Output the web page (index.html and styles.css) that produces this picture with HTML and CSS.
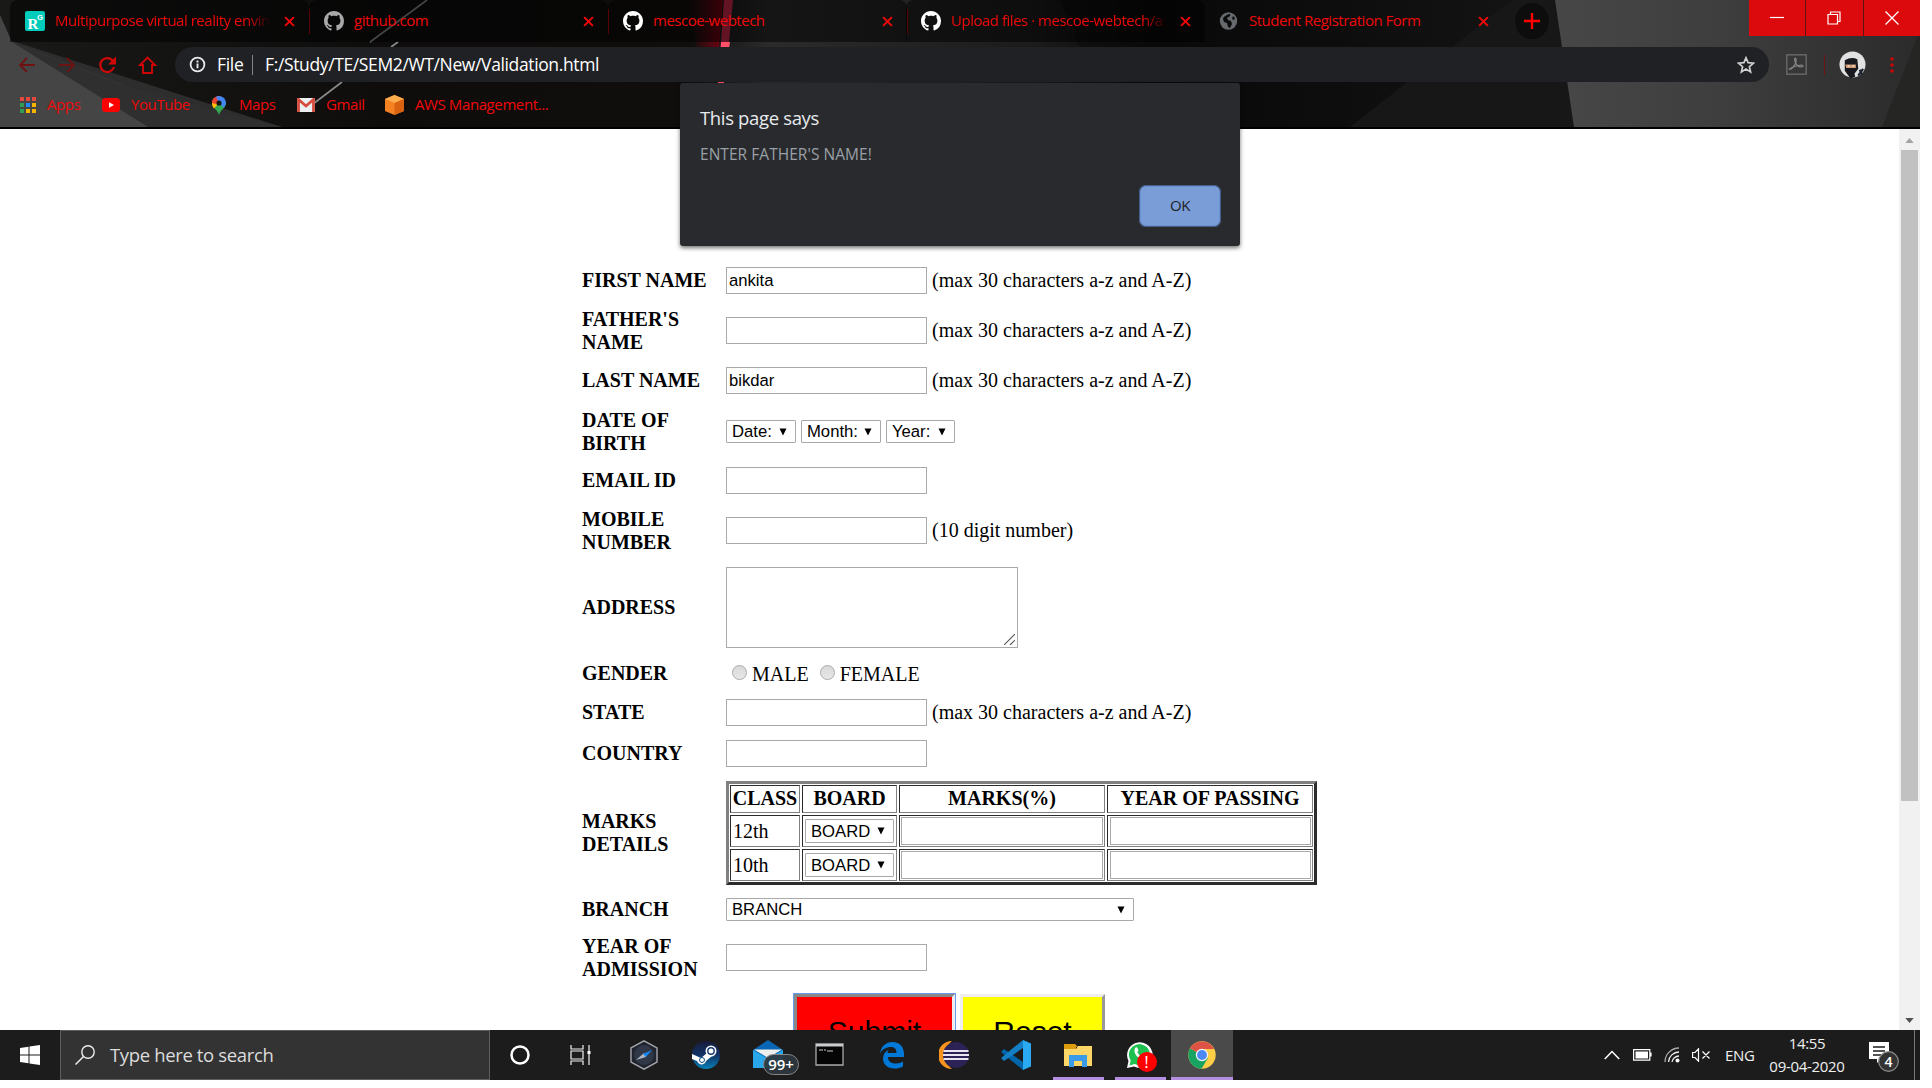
FILE: index.html
```html
<!DOCTYPE html>
<html lang="en">
<head>
<meta charset="utf-8">
<title>Student Registration Form</title>
<link rel="stylesheet" href="styles.css">
</head>
<body>
<svg class="defs" width="0" height="0">
  <defs>
    <symbol id="github" viewBox="0 0 16 16"><path fill-rule="evenodd" d="M8 0C3.58 0 0 3.58 0 8c0 3.54 2.29 6.53 5.47 7.59.4.07.55-.17.55-.38 0-.19-.01-.82-.01-1.49-2.01.37-2.53-.49-2.69-.94-.09-.23-.48-.94-.82-1.13-.28-.15-.68-.52-.01-.53.63-.01 1.08.58 1.23.82.72 1.21 1.87.87 2.33.66.07-.52.28-.87.51-1.07-1.78-.2-3.64-.89-3.64-3.95 0-.87.31-1.59.82-2.15-.08-.2-.36-1.02.08-2.12 0 0 .67-.21 2.2.82.64-.18 1.32-.27 2-.27s1.36.09 2 .27c1.53-1.04 2.2-.82 2.2-.82.44 1.1.16 1.92.08 2.12.51.56.82 1.27.82 2.15 0 3.07-1.87 3.75-3.65 3.95.29.25.54.73.54 1.48 0 1.07-.01 1.93-.01 2.2 0 .21.15.46.55.38A8.01 8.01 0 0 0 16 8c0-4.42-3.58-8-8-8z"/></symbol>
    <symbol id="close" viewBox="0 0 10 10"><path d="M1 1l8 8M9 1L1 9" stroke="#f00808" stroke-width="1.8" fill="none"/></symbol>
    <symbol id="arrow" viewBox="0 0 8 8"><path d="M.5 0.5h7L4 7.500z" fill="#000"/></symbol>
  </defs>
</svg>
<div class="screen">
  <header class="chrome">
    <svg class="theme" viewBox="0 0 1920 127" preserveAspectRatio="none">
      <defs>
        <linearGradient id="base"><stop offset="0" stop-color="#191918"/><stop offset=".2" stop-color="#0e0d0c"/><stop offset=".36" stop-color="#100e0d"/><stop offset=".4" stop-color="#2b2b2b"/><stop offset=".54" stop-color="#1b1b1b"/><stop offset=".6" stop-color="#060606"/><stop offset=".7" stop-color="#111"/><stop offset=".8" stop-color="#222"/></linearGradient>
        <linearGradient id="right"><stop offset="0" stop-color="#474747"/><stop offset=".45" stop-color="#3e3e3e"/><stop offset="1" stop-color="#2b2b2b"/></linearGradient>
        <linearGradient id="glow"><stop offset="0" stop-color="#500008" stop-opacity="0"/><stop offset="1" stop-color="#780010"/></linearGradient>
      </defs>
      <rect width="1920" height="127" fill="url(#base)"/>
      <path d="M0 37L282 127H0z" fill="#2d2d2d"/>
      <path d="M0 15L12 42L129 87L148 127H0z" fill="#454545"/>
      <path d="M12 42L115 82L129 87L282 127H148z" fill="#2f2f2f"/>
      <path d="M427 0L370 42M398 42L391 47M342 82L313 104" stroke="#8a8a8a" stroke-width="1.6"/>
      <path d="M688 0h35l-4 47h-22z" fill="url(#glow)"/>
      <path d="M724 0h9l-4 42h-8z" fill="#c5284a"/>
      <path d="M721 42h9l-6 41h-6z" fill="#ff5069"/>
      <path d="M1060 0L1080 47L1170 127H1350L1520 0z" fill="#0c0c0c" opacity=".6"/>
      <path d="M1350 127L1512 0H1556L1574 127z" fill="#171717"/>
      <path d="M1555 0L1574 127H1920V0z" fill="url(#right)"/>
      <path d="M1920 30L1882 127H1920z" fill="#252524"/>
    </svg>
    <div class="tabs">
      <div class="tab"><svg class="fav" viewBox="0 0 20 20"><rect width="20" height="20" rx="2" fill="#00ccbb"/><text x="2.5" y="17.5" font-family="Liberation Serif, serif" font-weight="bold" font-size="15" fill="#fff">R</text><text x="12" y="8.5" font-family="Liberation Sans, sans-serif" font-weight="bold" font-size="8" fill="#fff">G</text></svg><span class="title fade">Multipurpose virtual reality environment</span><svg class="x"><use href="#close"/></svg></div>
      <div class="tab"><svg class="fav gray"><use href="#github"/></svg><span class="title">github.com</span><svg class="x"><use href="#close"/></svg></div>
      <div class="tab"><svg class="fav white"><use href="#github"/></svg><span class="title">mescoe-webtech</span><svg class="x"><use href="#close"/></svg></div>
      <div class="tab last-sep"><svg class="fav white"><use href="#github"/></svg><span class="title fade">Upload files · mescoe-webtech/assignment</span><svg class="x"><use href="#close"/></svg></div>
      <div class="tab active"><svg class="fav" viewBox="0 0 20 20"><circle cx="9.5" cy="10" r="8.7" fill="#66696d"/><path d="M8 4c2-2 4-1 3 1l-3 2 1 2 3 1 1 3-2 4-2-1-1-4-3-1-1-3c0-2 2-3 4-4zM14 5l2 2-1 2-2-1z" fill="#0c0c0c"/></svg><span class="title">Student Registration Form</span><svg class="x"><use href="#close"/></svg></div>
      <div class="newtab"><svg viewBox="0 0 16 16"><path d="M8 0v16M0 8h16" stroke="#f00" stroke-width="2.4"/></svg></div>
      <div class="winbtns">
        <div><svg viewBox="0 0 14 14"><path d="M0 6.5h14" stroke="#fff" stroke-width="1.2"/></svg></div>
        <div><svg viewBox="0 0 14 14"><path d="M1 3.5h9.5V13H1zM3.5 3.5V1H13v9.5h-2.5" stroke="#fff" stroke-width="1.2" fill="none"/></svg></div>
        <div><svg viewBox="0 0 14 14"><path d="M.5.5l13 13M13.500.5l-13 13" stroke="#fff" stroke-width="1.3"/></svg></div>
      </div>
    </div>
    <div class="toolbar">
      <svg class="nav" viewBox="0 0 150 24">
        <g fill="none" stroke-width="1.800"><path d="M18 12H3M10 5L3 12l7 7M42 12h15M50 5l7 7-7 7" stroke="#6c1212"/><path d="M96 8A7 7 0 1 0 97 14" stroke="#d00808" stroke-width="2.2"/><path d="M123 12h3v8h9v-8h3L130.500 4.500z" stroke="#cf0606" stroke-width="1.900"/></g><path d="M99 3.500v8h-8z" fill="#d00808"/>
      </svg>
      <div class="omnibox">
        <svg class="info" viewBox="0 0 18 18"><circle cx="9" cy="9" r="7.3" fill="none" stroke="#e8eaed" stroke-width="1.9"/><path d="M9 8v5M9 4.800v2" stroke="#e8eaed" stroke-width="2"/></svg>
        <span class="scheme">File</span><span class="bar"></span><span class="url">F:/Study/TE/SEM2/WT/New/Validation.html</span>
        <svg class="star" viewBox="0 0 18 18"><path d="M9 1.800l2.100 4.900 5.300.5-4 3.500 1.200 5.200L9 13.100l-4.600 2.800 1.200-5.200-4-3.500 5.300-.5z" fill="none" stroke="#d0d0d0" stroke-width="1.700"/></svg>
      </div>
      <svg class="pdf" viewBox="0 0 21 21"><rect x=".8" y=".8" width="19.400" height="19.400" fill="none" stroke="#666" stroke-width="1.500"/><path d="M4 15c3 0 7-7 6-10-2-3-2 3 1 6 3 3 6 2 6 1 0-2-8 0-12 2-2 1-2 2-1 1z" fill="none" stroke="#858585" stroke-width="1.200"/></svg>
      <span class="redbar"></span>
      <svg class="avatar" viewBox="0 0 28 28"><circle cx="14" cy="13.500" r="13.500" fill="#e1e1e1"/><path d="M6 9q7-4 13-1l1 10-4 5 1 3-5 2-3-4-3-4z" fill="#17191f"/><path d="M6.500 13.500h11v3.500h-10z" fill="#d09a75"/><path d="M9 15h2M14 15h2" stroke="#fff" stroke-width="1.200"/><path d="M20 25l5-7M21.500 19l2.500 5" stroke="#1d2230" stroke-width="2.300"/></svg>
      <svg class="dots" viewBox="0 0 4 16"><circle cx="2" cy="2" r="1.800"/><circle cx="2" cy="8" r="1.800"/><circle cx="2" cy="14" r="1.800"/></svg>
    </div>
    <div class="bookmarks">
      <div class="bm apps"><svg viewBox="0 0 16 16"><path fill="#e2483d" d="M0 0h4v4H0zM6 0h4v4H6zM12 0h4v4h-4z"/><path fill="#2f9d52" d="M0 6h4v4H0zM0 12h4v4H0z"/><path fill="#1e88ff" d="M6 6h4v4H6z"/><path fill="#f5b400" d="M12 6h4v4h-4zM6 12h4v4H6zM12 12h4v4h-4z"/></svg><span>Apps</span></div>
      <div class="bm yt"><svg viewBox="0 0 18 14"><rect width="18" height="14" rx="3.500" fill="#f00"/><path d="M7 4.200v5.600L12 7z" fill="#fff"/></svg><span>YouTube</span></div>
      <div class="bm maps"><svg viewBox="0 0 14 19"><path d="M7 19C6 14 0 12 0 7l14 0c0 5-6 7-7 12z" fill="#34a853"/><path d="M0 7a7 7 0 0 1 2-5l5 5-5 5.500C.7 11 0 9 0 7z" fill="#fbbc04"/><path d="M2 2a7 7 0 0 1 7.500-1.500L4 8 0 7c0-2 .7-4 2-5z" fill="#ea4335"/><path d="M4 .8A7 7 0 0 1 14 7l-2 5L7 7z" fill="#4285f4"/><circle cx="7" cy="7" r="2.600" fill="#151515"/></svg><span>Maps</span></div>
      <div class="bm gmail"><svg viewBox="0 0 18 14"><rect width="18" height="14" rx="1" fill="#eceff1"/><path d="M1.500 14V1.500L9 8l7.500-6.500V14" fill="none" stroke="#d54b3d" stroke-width="2.800"/></svg><span>Gmail</span></div>
      <div class="bm aws"><svg viewBox="0 0 19 20"><path d="M0 4L9.500 0 19 4v12l-9.500 4L0 16z" fill="#f58220"/><path d="M0 4L9.500 0 19 4l-9.500 4z" fill="#ffac4d"/><path d="M9.500 8L19 4v12l-9.500 4z" fill="#d8620f"/></svg><span>AWS Management...</span></div>
    </div>
    <div class="dialog">
      <div class="says">This page says</div>
      <div class="msg">ENTER FATHER'S NAME!</div>
      <div class="ok">OK</div>
    </div>
  </header>

  <main class="page">
    <form class="form">
      <div class="row" style="height:41px"><b>FIRST NAME</b><div class="field"><i class="input">ankita</i><span class="hint">(max 30 characters a-z and A-Z)</span></div></div>
      <div class="row" style="height:59px"><b>FATHER'S<br>NAME</b><div class="field"><i class="input"></i><span class="hint">(max 30 characters a-z and A-Z)</span></div></div>
      <div class="row" style="height:41px"><b>LAST NAME</b><div class="field"><i class="input">bikdar</i><span class="hint">(max 30 characters a-z and A-Z)</span></div></div>
      <div class="row" style="height:61px"><b>DATE OF<br>BIRTH</b><div class="field"><i class="select day">Date:<svg><use href="#arrow"/></svg></i><i class="select month">Month:<svg><use href="#arrow"/></svg></i><i class="select year">Year:<svg><use href="#arrow"/></svg></i></div></div>
      <div class="row" style="height:37px"><b>EMAIL ID</b><div class="field"><i class="input"></i></div></div>
      <div class="row" style="height:63px"><b>MOBILE<br>NUMBER</b><div class="field"><i class="input"></i><span class="hint">(10 digit number)</span></div></div>
      <div class="row" style="height:91px"><b>ADDRESS</b><div class="field"><i class="area"><svg viewBox="0 0 10 10"><path d="M0 10L10 0M5.500 10L10 5.500" stroke="#555"/></svg></i></div></div>
      <div class="row" style="height:40px"><b>GENDER</b><div class="field genders"><i class="radio"></i><span class="male">MALE</span><i class="radio"></i><span class="female">FEMALE</span></div></div>
      <div class="row" style="height:39px"><b>STATE</b><div class="field"><i class="input"></i><span class="hint">(max 30 characters a-z and A-Z)</span></div></div>
      <div class="row" style="height:43px"><b>COUNTRY</b><div class="field"><i class="input"></i></div></div>
      <div class="row" style="height:116px"><b>MARKS<br>DETAILS</b>
        <div class="marks">
          <div class="th">CLASS</div><div class="th">BOARD</div><div class="th">MARKS(%)</div><div class="th">YEAR OF PASSING</div>
          <div>12th</div><div><i class="select board">BOARD<svg><use href="#arrow"/></svg></i></div><div><i class="input"></i></div><div><i class="input"></i></div>
          <div>10th</div><div><i class="select board">BOARD<svg><use href="#arrow"/></svg></i></div><div><i class="input"></i></div><div><i class="input"></i></div>
        </div>
      </div>
      <div class="row" style="height:37px"><b>BRANCH</b><div class="field"><i class="select branch">BRANCH<svg><use href="#arrow"/></svg></i></div></div>
      <div class="row" style="height:59px"><b>YEAR OF<br>ADMISSION</b><div class="field"><i class="input"></i></div></div>
      <div class="actions"><div class="submit">Submit</div><div class="reset">Reset</div></div>
    </form>
    <div class="scroll"><svg viewBox="0 0 10 6"><path d="M0 6L5 0l5 6z" fill="#a3a3a3"/></svg><div class="thumb"></div><svg viewBox="0 0 10 6"><path d="M0 0l5 6 5-6z" fill="#505050"/></svg></div>
  </main>

  <footer class="taskbar">
    <div class="start"><svg viewBox="0 0 20 20"><path d="M0 3l8.500-1.200v7.700H0zM9.500 1.600L20 0v9.500H9.500zM0 10.500h8.500v7.700L0 17zM9.500 10.500H20V20L9.500 18.400z" fill="#fff"/></svg></div>
    <div class="search"><svg viewBox="0 0 20 20"><circle cx="13" cy="7" r="6.200" fill="none" stroke="#eee" stroke-width="1.400"/><path d="M8.500 11.500L.5 19.500" stroke="#eee" stroke-width="1.500"/></svg><span>Type here to search</span></div>
    <div class="apps-row">
      <div class="app"><svg viewBox="0 0 30 30"><circle cx="15" cy="15" r="8.500" fill="none" stroke="#fff" stroke-width="2.500"/></svg></div>
      <div class="app"><svg viewBox="0 0 30 30"><path d="M4 5v4h12V5M4 25v-4h12v4M4 11h12v8H4zM22 5v20" fill="none" stroke="#f2f2f2" stroke-width="1.200"/><path d="M20.500 11h3v3h-3z" fill="#fff"/></svg></div>
      <div class="app"><svg viewBox="0 0 30 30"><path d="M15 .8L28 8v14l-13 7.200L2 22V8z" fill="#20242f" stroke="#a7a9ae" stroke-width="1.400"/><circle cx="15" cy="15" r="10" fill="#303746"/><path d="M7 20l8-7 2 4z" fill="#aab6c5"/><path d="M14 14l9-4-6 7z" fill="#1687f3"/></svg></div>
      <div class="app"><svg viewBox="0 0 30 30"><defs><linearGradient id="steam" x2="0" y2="1"><stop stop-color="#171b3b"/><stop offset=".5" stop-color="#123366"/><stop offset="1" stop-color="#0780b8"/></linearGradient></defs><circle cx="15" cy="15" r="14" fill="url(#steam)"/><path d="M1 14l9 4 6-5 5 3-6 5c-1 4-7 5-9 0l-5-2z" fill="#fff"/><circle cx="20" cy="11" r="5.500" fill="#fff"/><circle cx="20" cy="11" r="3.200" fill="#fff" stroke="#163b6c" stroke-width="1.400"/><circle cx="11" cy="20" r="2.500" fill="none" stroke="#174f83"/></svg></div>
      <div class="app"><svg viewBox="0 0 30 30"><path d="M0 10L15 0l15 10v18H0z" fill="#0866b4"/><path d="M0 10l15 9 15-9v18H0z" fill="#28a8ea"/><path d="M1 9.500h28L15 18z" fill="#eee"/></svg><span class="count">99+</span></div>
      <div class="app"><svg viewBox="0 0 30 30"><path d="M1 4h27v21H1z" fill="#050505" stroke="#a9aaac" stroke-width="1.300"/><path d="M1 4h27v2.500H1z" fill="#c9cbce"/><path d="M4 10h2M7 9v2M9 10h2M12 11h6" stroke="#ccc"/></svg></div>
      <div class="app"><svg viewBox="0 0 30 30"><path d="M3 14C4 5 10 2 15.500 2 23 2 27 7.500 27 14v3H11c0 5 4 6.500 8 6.500 3 0 5-.8 7-2v5c-3 1.500-5 2-8.500 2C10 28.500 6 24 6 18.500c0-4 2-7 6-9-1 1-1.500 2.500-1.500 3.500h9c0-4-2-6-5.500-6C9.500 7 5 9 3 14z" fill="#0078d7"/></svg></div>
      <div class="app"><svg viewBox="0 0 30 30"><path d="M13 1A14 14 0 0 0 13 29C5 23 5 7 13 1z" fill="#f7941e"/><circle cx="17" cy="15" r="13" fill="#2c2255"/><path d="M4.500 11h25M4 15h26M4.500 19h25" stroke="#e8e4f2" stroke-width="2.200"/></svg></div>
      <div class="app"><svg viewBox="0 0 30 30"><path d="M22 0v30L0 12l3-3 19 13z" fill="#0065a9"/><path d="M22 0L0 18l3 3L22 8z" fill="#147fc4"/><path d="M22 0l8 3.500v23L22 30z" fill="#2aaaf3"/></svg></div>
      <div class="app open"><svg viewBox="0 0 30 30"><path d="M1 4h11l3 3h-2v6H1z" fill="#dc9c0d"/><path d="M1 9h12l2-3h14v20H1z" fill="#fcd667"/><path d="M6 27V15h18v12h-5v-6h-8v6z" fill="#3b9be8"/></svg></div>
      <div class="app open"><svg viewBox="0 0 30 30"><path d="M2 28l1.500-7A12.800 12.800 0 1 1 9 26.500z" fill="#fff"/><path d="M4.500 25.500l1.200-5A10.500 10.500 0 1 1 9.700 24z" fill="#20c050"/><path d="M10 8c1-1 2-1 2.500 0l1 2.500-1.200 1.700c1 2 2.500 3 4.500 4l1.700-1.700 3 1.500c0 3-2.500 4-5 3.300C12 17.500 8 13 10 8z" fill="#fff"/></svg><span class="bang">!</span></div>
      <div class="app current"><svg viewBox="0 0 30 30"><circle cx="15" cy="15" r="13.700" fill="#ffcd46"/><path d="M15 15L3.100 8.200A13.700 13.700 0 0 0 14.500 28.700L21 18z" fill="#17a463"/><path d="M15 15L3.100 8.200A13.700 13.700 0 0 1 27 9H15z" fill="#de5246"/><circle cx="15" cy="15" r="6.200" fill="#f1f1f1"/><circle cx="15" cy="15" r="4.900" fill="#4c8bf5"/></svg></div>
    </div>
    <div class="tray">
      <svg class="chev" viewBox="0 0 16 10"><path d="M.8 9L8 1.500 15.200 9" fill="none" stroke="#fff" stroke-width="1.500"/></svg>
      <svg class="batt" viewBox="0 0 19 12"><path d="M.6.600h16.200v10.500H.6zM18 3.500v4" fill="none" stroke="#fff" stroke-width="1.200"/><path d="M2.500 2.500h12.500v7H2.500z" fill="#fff"/></svg>
      <svg class="wifi" viewBox="0 0 16 16"><g fill="none" stroke="#aaa" stroke-width="1.300"><path d="M1 15A14 14 0 0 1 15 1"/><path d="M4.500 15A10.500 10.500 0 0 1 15 5M8 15A7 7 0 0 1 15 9" stroke="#eee"/></g><circle cx="13.500" cy="13.500" r="2" fill="#fff"/></svg>
      <svg class="snd" viewBox="0 0 18 14"><path d="M.6 4.500h2.500L6.500.8v12.400L3.100 9.500H.6zM10.500 3.500l7 7M17.500 3.500l-7 7" fill="none" stroke="#fff" stroke-width="1.200"/></svg>
      <span class="lang">ENG</span>
      <div class="clock"><span class="time">14:55</span><span>09-04-2020</span></div>
      <svg class="note" viewBox="0 0 30 32"><path d="M0 0h20v17h-8l-4 4v-4H0z" fill="#fff"/><path d="M4 5h12M4 9h12M4 13h8" stroke="#1b1b1b" stroke-width="1.300"/><circle cx="19.500" cy="19.500" r="9.800" fill="#333" stroke="#8d8d8d" stroke-width="1.200"/><text x="15.500" y="24.500" font-family="Open Sans, sans-serif" font-size="14" font-weight="600" fill="#fff">4</text></svg>
      <span class="peek"></span>
    </div>
  </footer>
</div>
</body>
</html>
```
FILE: styles.css
```css
* { box-sizing: border-box; }
body { margin: 0; width: 1932px; height: 1088px; background: #fff; overflow: hidden; font-family: "Open Sans", "Noto Sans", sans-serif; }
svg { display: block; flex: none; }
.defs { position: absolute; }
i { font-style: normal; }
.screen { width: 1920px; height: 1080px; display: flex; flex-direction: column; background: #fff; }

/* browser frame */
.chrome { position: relative; height: 129px; flex: none; border-bottom: 2px solid #000; display: flex; flex-direction: column; }
.theme { position: absolute; inset: 0; width: 1920px; height: 127px; }
.tabs, .toolbar, .bookmarks { position: relative; display: flex; align-items: center; }
.tabs { height: 42px; padding-left: 10px; color: #f00808; font-size: 15px; }
.tab { width: 299px; height: 42px; flex: none; display: flex; align-items: center; padding: 0 14px 0 15px; position: relative; background: rgba(0,0,0,.5); border-radius: 8px 8px 0 0; }
.tab::after { content: ""; position: absolute; right: -1px; top: 9px; width: 1px; height: 25px; background: #b00606; }
.last-sep::after, .active::after { display: none; }
.last-sep, .tab.active { margin-left: -1px; }
.tab.active { background: none; }
.fav { width: 20px; height: 20px; }
.gray { fill: #a8a8a8; }
.white { fill: #fff; }
.title { margin: -2px 0 0 10px; width: 219px; white-space: nowrap; overflow: hidden; letter-spacing: -.48px; line-height: 24px; }
.fade { -webkit-mask-image: linear-gradient(90deg, #000 88%, transparent 99%); mask-image: linear-gradient(90deg, #000 88%, transparent 99%); }
.x { width: 11px; height: 11px; margin-left: 11px; }
.newtab { width: 34px; height: 36px; margin-left: 12px; border-radius: 50%; background: #0d0d0d; display: flex; align-items: center; justify-content: center; }
.newtab svg { width: 16px; height: 16px; }
.winbtns { margin-left: auto; align-self: flex-start; display: flex; gap: 1px; width: 171px; height: 36px; background: #5d1414; }
.winbtns div { flex: 1; background: #dc0a0d; display: flex; align-items: center; justify-content: center; }
.winbtns svg { width: 14px; height: 14px; }
.toolbar { height: 45px; }
.nav { width: 150px; height: 24px; margin-left: 17px; }
.omnibox { margin-left: 8px; width: 1594px; height: 35px; border-radius: 18px; background: #202124; display: flex; align-items: center; color: #fff; font-size: 17.500px; padding: 0 14px; }
.omnibox span:not(.bar) { margin-top: -2px; }
.info { width: 17px; height: 17px; }
.scheme { margin-left: 11px; width: 35px; letter-spacing: -.3px; }
.bar { width: 1px; height: 20px; background: #80868b; margin-right: 12px; }
.url { letter-spacing: -.37px; }
.star { width: 18px; height: 18px; margin-left: auto; }
.pdf { width: 21px; height: 21px; margin-left: 17px; }
.redbar { width: 1px; height: 20px; margin-left: 17px; background: #6f1215; }
.avatar { width: 27px; height: 28px; margin-left: 14px; }
.dots { width: 4px; height: 16px; margin-left: 24px; fill: #cf0505; }
.bookmarks { height: 40px; padding-left: 20px; padding-bottom: 4px; color: #f00808; font-size: 15px; letter-spacing: -.4px; }
.bm { display: flex; align-items: center; white-space: nowrap; flex: none; }
.bm span { margin-top: -2px; }
.bm svg { margin-right: 11px; }
.apps { width: 82px; } .apps svg { width: 16px; height: 16px; }
.yt { width: 110px; } .yt svg { width: 18px; height: 14px; }
.maps { width: 85px; } .maps svg { width: 14px; height: 19px; margin-right: 13px; }
.gmail { width: 88px; } .gmail svg { width: 18px; height: 14px; }
.aws svg { width: 19px; height: 20px; }
.dialog { position: absolute; z-index: 2; left: 680px; top: 83px; width: 560px; height: 163px; background: #292a2d; border-radius: 3px; box-shadow: 0 2px 4px rgba(0,0,0,.55); padding: 22px 20px 18px 20px; display: flex; flex-direction: column; }
.says { font-size: 18.500px; line-height: 26px; color: #e8eaed; letter-spacing: -.35px; }
.msg { font-size: 15.500px; line-height: 22px; margin-top: 12px; color: #9aa0a6; letter-spacing: .04px; }
.ok { align-self: flex-end; margin-top: 21px; width: 80px; height: 40px; border: 1px solid #6f92cc; outline: 1px solid #45608c; border-radius: 5px; background: #7a9dd8; color: #202124; font-size: 15px; line-height: 36px; text-align: center; letter-spacing: -.4px; }

/* registration form */
.page { height: 901px; flex: none; overflow: hidden; display: flex; justify-content: space-between; font: 20px/23px "Liberation Serif", serif; color: #000; }
.form { margin-left: 582px; padding-top: 131px; width: 760px; flex: none; }
.row { display: grid; grid-template-columns: 144px 1fr; align-items: center; }
.row b { font-size: 20px; white-space: nowrap; }
.field { display: flex; align-items: center; white-space: nowrap; }
.hint { margin-top: -1px; }
.input { width: 201px; height: 27px; border: 1px solid #a9a9a9; margin-right: 5px; padding-left: 2px; font: 16.670px/25px "Liberation Sans", sans-serif; flex: none; }
.select { height: 23px; border: 1px solid #a9a9a9; border-radius: 1px; margin-right: 5px; padding: 0 8px 0 5px; font: 16.670px/21px "Liberation Sans", sans-serif; display: flex; align-items: center; justify-content: space-between; }
.select svg { width: 8px; height: 8px; }
.day { width: 70px; }
.month { width: 80px; }
.year { width: 69px; }
.branch { width: 408px; }
.area { width: 292px; height: 81px; border: 1px solid #a9a9a9; display: flex; align-items: flex-end; justify-content: flex-end; padding: 2px; }
.area svg { width: 11px; height: 11px; }
.radio { width: 15px; height: 15px; border: 1px solid #aaa; border-radius: 50%; background: linear-gradient(#d8d8d8, #e8e8e8); margin: 0 5px 2px 6px; }
.male, .female { margin-top: 2px; }
.male { margin-right: 5px; }
.marks { display: grid; grid-template-columns: 70px 95px 206px 206px; grid-template-rows: 28px 32px 32px; gap: 2px; width: 591px; height: 104px; border: 3px solid; border-color: #808080 #2c2c2c #2c2c2c #808080; padding: 1px; }
.marks > div { border: 1px solid; border-color: #2c2c2c #808080 #808080 #2c2c2c; display: flex; align-items: center; padding: 0 2px; }
.marks .th { font-weight: bold; justify-content: center; padding-bottom: 1px; }
.marks .input { width: 202px; height: 28px; margin: 0 0 0 -1px; }
.marks > div:nth-child(4n) .input { margin-left: 0; width: 201px; }
.marks .board { width: 90px; height: 24px; margin: 0; }
.actions { display: flex; gap: 5px; padding: 7px 0 0 212px; font: 30px/34px "Liberation Sans", sans-serif; text-align: center; }
.submit { width: 161px; height: 66px; background: #f00; border: 3px solid; border-color: #888 #eee #eee #888; outline: 1px solid #699bed; padding-top: 18px; }
.reset { width: 145px; height: 66px; background: #ff0; border: 3px solid; border-color: #eee #999 #999 #eee; padding-top: 18px; }
.scroll { width: 21px; height: 901px; background: #f1f1f1; display: flex; flex-direction: column; align-items: center; padding: 9px 0 7px; }
.scroll svg { width: 9px; height: 5px; }
.thumb { width: 17px; height: 651px; margin: 7px 0 auto; background: #c1c1c1; }

/* taskbar */
.taskbar { height: 50px; flex: none; background: #1c1c1c; display: flex; align-items: center; color: #f0f0f0; }
.start { width: 60px; display: flex; justify-content: center; }
.start svg { width: 20px; height: 20px; }
.search { width: 430px; height: 50px; background: #333; border: 1px solid #5d5d5d; display: flex; align-items: center; padding-left: 14px; font-size: 18.500px; letter-spacing: -.36px; color: #dcdcdc; }
.search span { margin-top: -2px; }
.search svg { width: 20px; height: 20px; margin-right: 15px; }
.apps-row { display: flex; margin-left: -1px; }
.app { width: 62px; height: 50px; position: relative; display: flex; align-items: center; justify-content: center; }
.app svg { width: 30px; height: 30px; }
.open { box-shadow: inset 0 -3px #b48ee0; width: 51px; margin: 0 5.500px; }
.current { background: #4a4a4a; box-shadow: inset 0 -3px #b48ee0; }
.count { position: absolute; left: 26px; top: 24px; width: 36px; height: 21px; border: 1px solid #888; border-radius: 11px; background: rgba(45,55,62,.94); font-size: 15px; font-weight: 600; line-height: 18px; text-align: center; color: #fff; }
.bang { position: absolute; left: 22px; top: 22px; width: 20px; height: 20px; border-radius: 50%; background: #f00; font-size: 17px; line-height: 19px; text-align: center; color: #fff; }
.tray { margin-left: auto; display: flex; align-items: center; width: 316px; height: 50px; }
.chev { width: 16px; height: 10px; }
.batt { width: 19px; height: 12px; margin-left: 13px; }
.wifi { width: 16px; height: 16px; margin-left: 12px; }
.snd { width: 18px; height: 14px; margin-left: 12px; }
.lang { width: 30px; margin-left: 15px; font-size: 15px; letter-spacing: -.3px; }
.clock { width: 88px; margin: -1px 0 0 8px; display: flex; flex-direction: column; font-size: 15px; line-height: 23px; text-align: center; letter-spacing: -.3px; white-space: nowrap; }
.note { width: 30px; height: 32px; margin: 6px 0 0 18px; }
.peek { width: 1px; height: 50px; margin-left: auto; margin-right: 5px; background: #777; }
```
